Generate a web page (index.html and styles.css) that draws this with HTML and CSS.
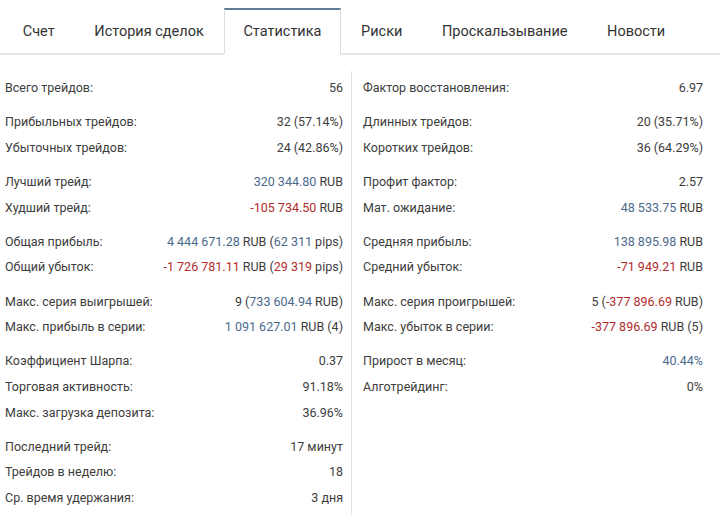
FILE: index.html
```html
<!DOCTYPE html>
<html lang="ru">
<head>
<meta charset="utf-8">
<link rel="stylesheet" href="styles.css">
</head>
<body>
<nav class="tabs">
  <div class="tab">Счет</div>
  <div class="tab">История сделок</div>
  <div class="tab active">Статистика</div>
  <div class="tab">Риски</div>
  <div class="tab">Проскальзывание</div>
  <div class="tab">Новости</div>
</nav>
<main class="stats">
  <section class="col left">
    <div class="group">
      <div class="row"><span>Всего трейдов:</span><span>56</span></div>
    </div>
    <div class="group">
      <div class="row"><span>Прибыльных трейдов:</span><span>32 (57.14%)</span></div>
      <div class="row"><span>Убыточных трейдов:</span><span>24 (42.86%)</span></div>
    </div>
    <div class="group">
      <div class="row"><span>Лучший трейд:</span><span><b class="pos">320 344.80</b> RUB</span></div>
      <div class="row"><span>Худший трейд:</span><span><b class="neg">-105 734.50</b> RUB</span></div>
    </div>
    <div class="group">
      <div class="row"><span>Общая прибыль:</span><span><b class="pos">4 444 671.28</b> RUB (<b class="pos">62 311</b> pips)</span></div>
      <div class="row"><span>Общий убыток:</span><span><b class="neg">-1 726 781.11</b> RUB (<b class="neg">29 319</b> pips)</span></div>
    </div>
    <div class="group">
      <div class="row"><span>Макс. серия выигрышей:</span><span>9 (<b class="pos">733 604.94</b> RUB)</span></div>
      <div class="row"><span>Макс. прибыль в серии:</span><span><b class="pos">1 091 627.01</b> RUB (4)</span></div>
    </div>
    <div class="group">
      <div class="row"><span>Коэффициент Шарпа:</span><span>0.37</span></div>
      <div class="row"><span>Торговая активность:</span><span>91.18%</span></div>
      <div class="row"><span>Макс. загрузка депозита:</span><span>36.96%</span></div>
    </div>
    <div class="group">
      <div class="row"><span>Последний трейд:</span><span>17 минут</span></div>
      <div class="row"><span>Трейдов в неделю:</span><span>18</span></div>
      <div class="row"><span>Ср. время удержания:</span><span>3 дня</span></div>
    </div>
  </section>
  <section class="col right">
    <div class="group">
      <div class="row"><span>Фактор восстановления:</span><span>6.97</span></div>
    </div>
    <div class="group">
      <div class="row"><span>Длинных трейдов:</span><span>20 (35.71%)</span></div>
      <div class="row"><span>Коротких трейдов:</span><span>36 (64.29%)</span></div>
    </div>
    <div class="group">
      <div class="row"><span>Профит фактор:</span><span>2.57</span></div>
      <div class="row"><span>Мат. ожидание:</span><span><b class="pos">48 533.75</b> RUB</span></div>
    </div>
    <div class="group">
      <div class="row"><span>Средняя прибыль:</span><span><b class="pos">138 895.98</b> RUB</span></div>
      <div class="row"><span>Средний убыток:</span><span><b class="neg">-71 949.21</b> RUB</span></div>
    </div>
    <div class="group">
      <div class="row"><span>Макс. серия проигрышей:</span><span>5 (<b class="neg">-377 896.69</b> RUB)</span></div>
      <div class="row"><span>Макс. убыток в серии:</span><span><b class="neg">-377 896.69</b> RUB (5)</span></div>
    </div>
    <div class="group">
      <div class="row"><span>Прирост в месяц:</span><span><b class="pos">40.44%</b></span></div>
      <div class="row"><span>Алготрейдинг:</span><span>0%</span></div>
    </div>
  </section>
</main>
</body>
</html>
```
FILE: styles.css
```css
* { box-sizing: border-box; }
html, body { margin: 0; padding: 0; background: #fff; }
body {
  font-family: Roboto, "Liberation Sans", sans-serif;
  color: #3d3d3d;
  width: 720px;
  height: 515px;
  overflow: hidden;
}
.tabs {
  display: flex;
  padding: 8px 0 0 3px;
  border-bottom: 2px solid #e6e6e6;
  height: 55px;
}
.tab {
  font-size: 14.5px;
  padding: 0 18.8px;
  line-height: 44px;
  color: #333;
  border: 1px solid transparent;
  border-top: 2px solid transparent;
  margin-bottom: -2px;
}
.tab.active {
  background: #fff;
  border-color: #dcdcdc;
  border-top-color: #5f7c98;
  border-bottom: 2px solid #fff;
  height: 47px;
}
.stats {
  display: flex;
  padding-top: 16px;
}
.col {
  font-size: 12.5px;
  padding-top: 4px;
}
.left {
  width: 352px;
  padding-left: 5px;
  padding-right: 8px;
  border-right: 1px solid #e3e3e3;
  padding-bottom: 30px;
}
.right {
  width: 368px;
  padding-left: 11px;
  padding-right: 17px;
}
.group + .group { margin-top: 8.6px; }
.row {
  display: flex;
  justify-content: space-between;
  height: 25.6px;
  line-height: 25.6px;
}
b { font-weight: normal; }
.pos { color: #4a6a8c; }
.neg { color: #b02c2c; }
```
